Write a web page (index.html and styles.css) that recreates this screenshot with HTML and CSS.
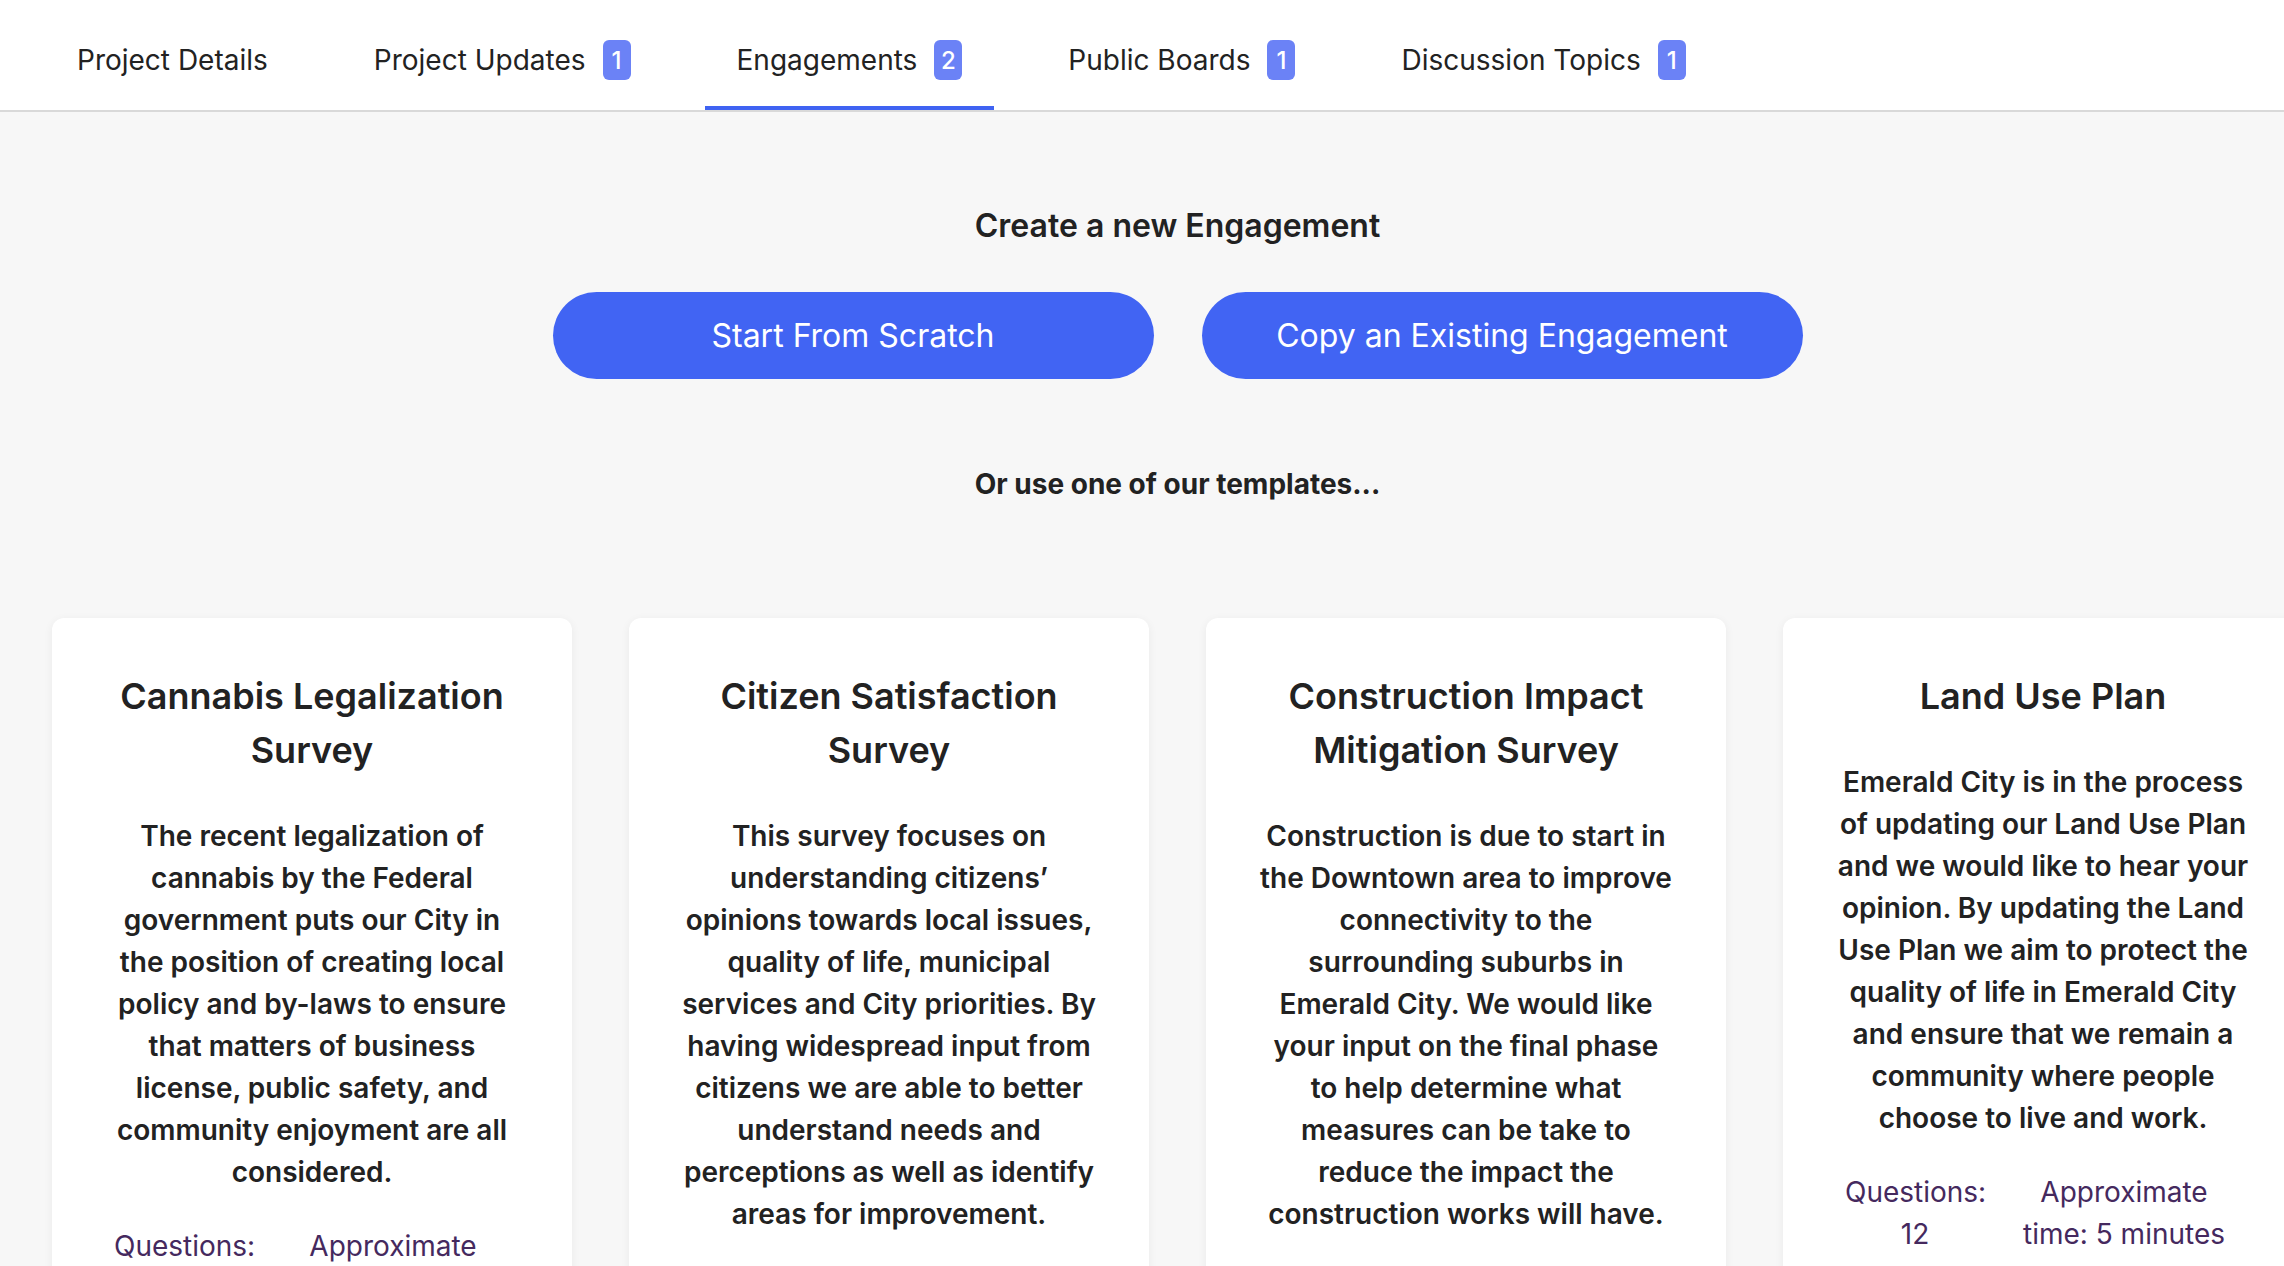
FILE: index.html
```html
<!DOCTYPE html>
<html lang="en">
<head>
<meta charset="utf-8">
<title>Engagements</title>
<link rel="stylesheet" href="styles.css">
</head>
<body>
<nav class="tabs">
  <div class="tab"><span>Project Details</span></div>
  <div class="tab"><span>Project Updates</span><span class="badge">1</span></div>
  <div class="tab active"><span>Engagements</span><span class="badge">2</span></div>
  <div class="tab"><span>Public Boards</span><span class="badge">1</span></div>
  <div class="tab"><span>Discussion Topics</span><span class="badge">1</span></div>
</nav>
<main class="main">
  <h2 class="create-title">Create a new Engagement</h2>
  <div class="actions">
    <button class="btn">Start From Scratch</button>
    <button class="btn">Copy an Existing Engagement</button>
  </div>
  <h3 class="templates-title">Or use one of our templates...</h3>
  <div class="cards">
    <div class="card">
      <h4 class="card-title">Cannabis Legalization Survey</h4>
      <p class="card-text">The recent legalization of cannabis by the Federal government puts our City in the position of creating local policy and by-laws to ensure that matters of business license, public safety, and community enjoyment are all considered.</p>
      <div class="meta"><div class="meta-q">Questions: 12</div><div class="meta-t">Approximate time: 5 minutes</div></div>
    </div>
    <div class="card">
      <h4 class="card-title">Citizen Satisfaction Survey</h4>
      <p class="card-text">This survey focuses on understanding citizens’ opinions towards local issues, quality of life, municipal services and City priorities. By having widespread input from citizens we are able to better understand needs and perceptions as well as identify areas for improvement.</p>
      <div class="meta"><div class="meta-q">Questions: 12</div><div class="meta-t">Approximate time: 5 minutes</div></div>
    </div>
    <div class="card">
      <h4 class="card-title">Construction Impact Mitigation Survey</h4>
      <p class="card-text">Construction is due to start in the Downtown area to improve connectivity to the surrounding suburbs in Emerald City. We would like your input on the final phase to help determine what measures can be take to reduce the impact the construction works will have.</p>
      <div class="meta"><div class="meta-q">Questions: 12</div><div class="meta-t">Approximate time: 5 minutes</div></div>
    </div>
    <div class="card">
      <h4 class="card-title">Land Use Plan</h4>
      <p class="card-text">Emerald City is in the process of updating our Land Use Plan and we would like to hear your opinion. By updating the Land Use Plan we aim to protect the quality of life in Emerald City and ensure that we remain a community where people choose to live and work.</p>
      <div class="meta"><div class="meta-q">Questions: 12</div><div class="meta-t">Approximate time: 5 minutes</div></div>
    </div>
  </div>
</main>
</body>
</html>
```
FILE: styles.css
```css
html, body {
  margin: 0;
  padding: 0;
}
body {
  font-family: Inter, "Noto Sans", "Liberation Sans", sans-serif;
  color: #222222;
  background: #f7f7f7;
  overflow: hidden;
  width: 2284px;
  height: 1266px;
}
.tabs {
  display: flex;
  align-items: stretch;
  gap: 42px;
  padding-left: 45px;
  background: #ffffff;
  border-bottom: 2px solid #d9d9d9;
  height: 110px;
  box-sizing: content-box;
}
.tab {
  display: flex;
  align-items: center;
  padding: 14px 32px 0;
  border-bottom: 4px solid transparent;
  font-size: 28px;
  color: #222222;
}
.tab.active {
  border-bottom-color: #3f63f2;
}
.badge {
  display: inline-flex;
  align-items: center;
  justify-content: center;
  width: 28px;
  height: 40px;
  margin-left: 17px;
  border-radius: 6px;
  background: #6b82f6;
  color: #ffffff;
  font-size: 24px;
  font-weight: 500;
}
.main {
  width: 2355px;
  display: flex;
  flex-direction: column;
  align-items: center;
  padding-top: 96px;
}
.create-title {
  margin: 0;
  font-size: 32px;
  line-height: 36px;
  font-weight: 600;
}
.actions {
  display: flex;
  gap: 48px;
  margin-top: 48px;
}
.btn {
  width: 601px;
  height: 87px;
  border: none;
  border-radius: 44px;
  background: #4164f3;
  color: #ffffff;
  font-family: inherit;
  font-size: 32px;
  font-weight: 400;
}
.templates-title {
  margin: 88px 0 0;
  font-size: 28px;
  line-height: 34px;
  font-weight: 700;
}
.cards {
  display: flex;
  gap: 57px;
  margin-top: 117px;
}
.card {
  width: 520px;
  box-sizing: border-box;
  padding: 51px 52px 40px;
  background: #ffffff;
  border-radius: 12px;
  box-shadow: 0 2px 10px rgba(0, 0, 0, 0.06);
  text-align: center;
  height: 800px;
}
.card-title {
  margin: 0;
  font-size: 36px;
  line-height: 54px;
  font-weight: 600;
}
.card-text {
  margin: 38px 0 0;
  font-size: 28px;
  line-height: 42px;
  font-weight: 600;
}
.meta {
  display: flex;
  justify-content: center;
  gap: 22px;
  margin-top: 32px;
  color: #45295e;
  font-size: 28px;
  line-height: 42px;
}
.meta-q {
  width: 140px;
}
.meta-t {
  width: 234px;
}
```
